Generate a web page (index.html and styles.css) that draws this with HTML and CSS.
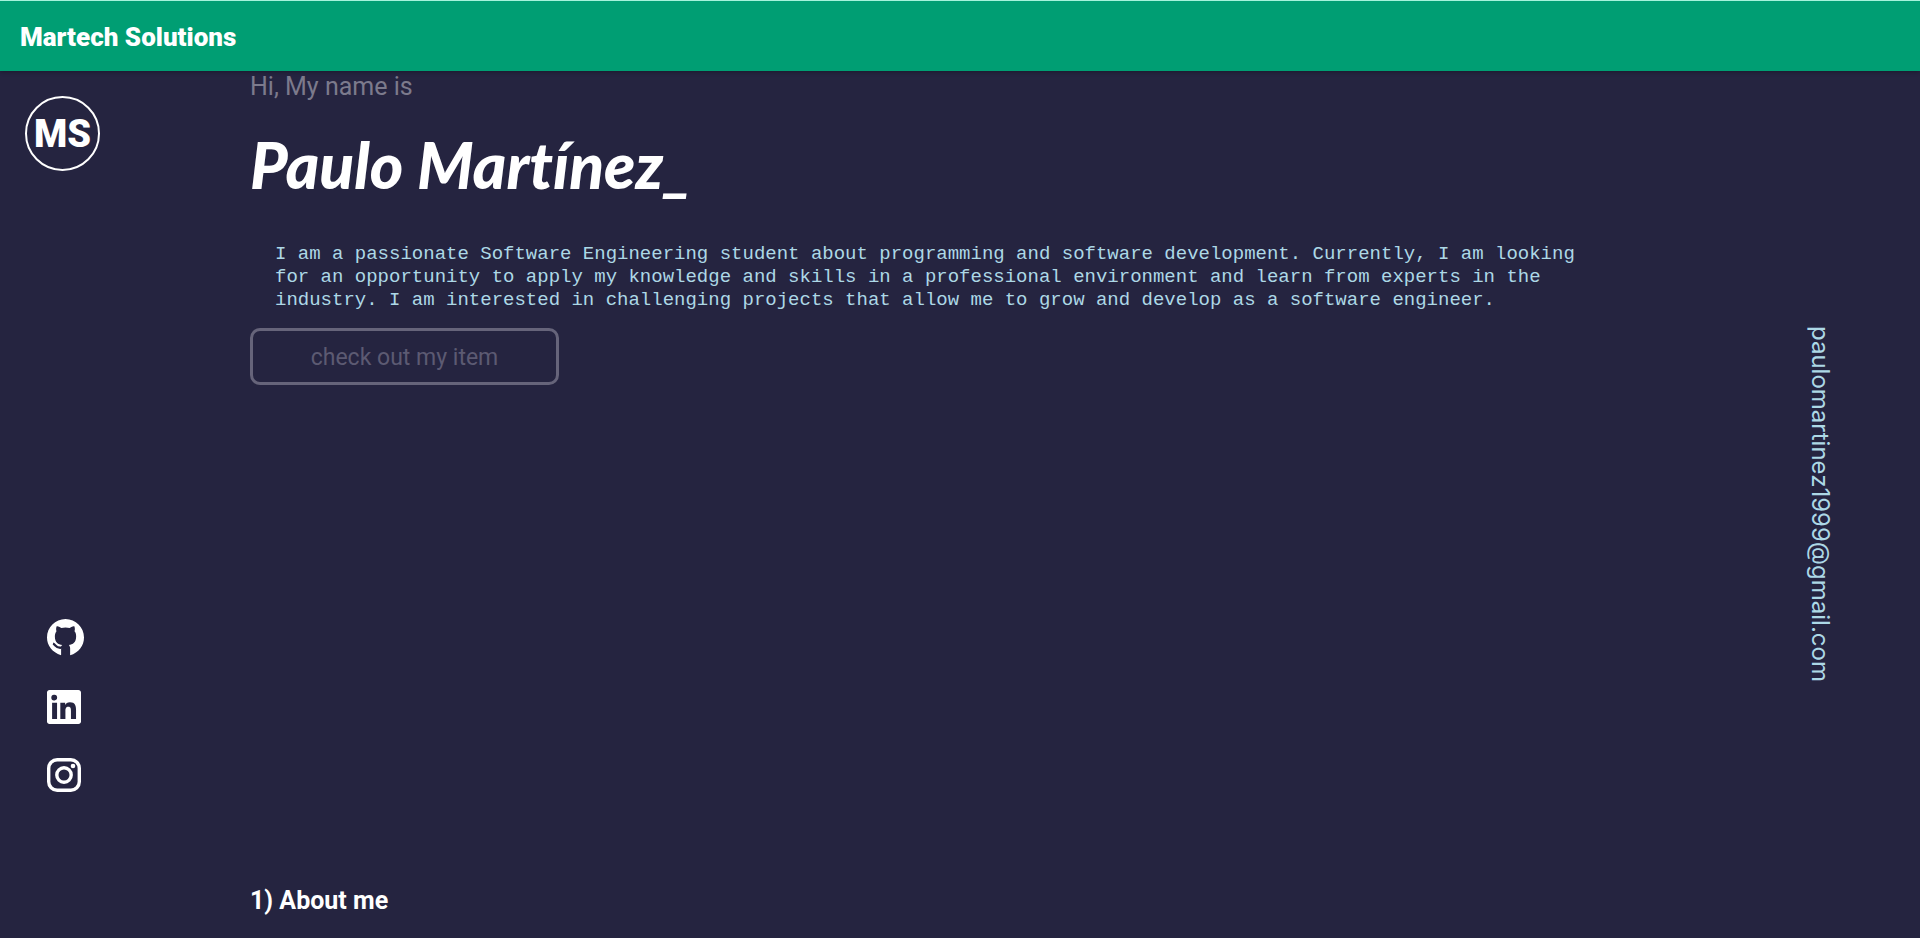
FILE: index.html
```html
<!DOCTYPE html>
<html lang="en">
<head>
<meta charset="utf-8">
<meta name="viewport" content="width=device-width, initial-scale=1">
<title>Martech Solutions</title>
<link rel="stylesheet" href="styles.css">
</head>
<body>
<header class="topbar"><a class="brand" href="#home">Martech Solutions</a></header>
<div class="page">
  <aside class="rail">
    <a class="logo" href="#home">MS</a>
    <nav class="social" aria-label="Social networks">
      <a class="social-link" href="#github" aria-label="GitHub">
        <svg class="icon icon-github" viewBox="0 0 16 16"><path d="M8 0C3.580 0 0 3.580 0 8c0 3.400 2.200 6.400 6.100 7.700V12.500C5.900 11.900 6.100 11.600 6.600 11.200c-1.780-.2-3.200-.95-3.200-3.750 0-.87.31-1.590.7-2.150-.08-.2-.36-1.020.08-2.120 0 0 .67-.1 2 .75a7.600 7.600 0 0 1 3.640 0c1.330-.85 2-.75 2-.75.44 1.100.16 1.920.08 2.120.51.560.7 1.270.7 2.150 0 2.800-1.420 3.550-3.200 3.750.35.3.6.8.6 1.480V15.700C13.700 14.600 16 11.540 16 8c0-4.420-3.580-8-8-8z"/><path class="tail" d="M2.600 10.700c1.200.3 1.100 2 3.500 1.700"/></svg>
      </a>
      <a class="social-link" href="#linkedin" aria-label="LinkedIn">
        <svg class="icon" viewBox="0 0 24 24"><path fill-rule="evenodd" d="M22.200 0H1.800C.8 0 0 .8 0 1.700v20.600c0 .9.8 1.700 1.800 1.700h20.400c1 0 1.800-.8 1.800-1.700V1.700C24 .8 23.200 0 22.200 0zM7.100 20.400H3.600V9h3.500v11.400zM5.300 7.400a2.060 2.060 0 1 1 0-4.100 2.060 2.060 0 0 1 0 4.100zM20.500 20.400h-3.600v-5.500c0-1.300 0-3-1.800-3s-2.100 1.400-2.100 2.900v5.600H9.400V9h3.400v1.600c.5-.9 1.600-1.900 3.400-1.900 3.600 0 4.300 2.400 4.300 5.500v6.200z"/></svg>
      </a>
      <a class="social-link" href="#instagram" aria-label="Instagram">
        <svg class="icon" viewBox="0 0 34 34"><rect x="1.700" y="1.700" width="30.600" height="30.600" rx="8.500" fill="none" stroke="currentColor" stroke-width="3.400"/><circle cx="17" cy="17" r="7.200" fill="none" stroke="currentColor" stroke-width="3.400"/><circle cx="26" cy="8" r="2.300"/></svg>
      </a>
    </nav>
  </aside>
  <main class="content">
    <section class="hero" id="home">
      <p class="greeting">Hi, My name is</p>
      <h1 class="name">Paulo Martínez_</h1>
      <p class="bio">I am a passionate Software Engineering student about programming and software development. Currently, I am looking for an opportunity to apply my knowledge and skills in a professional environment and learn from experts in the industry. I am interested in challenging projects that allow me to grow and develop as a software engineer.</p>
      <button class="cta" type="button">check out my item</button>
    </section>
    <section class="about"><h2 class="section-title">1) About me</h2></section>
  </main>
  <aside class="contact"><a class="email" href="mailto:paulomartinez1999@gmail.com">paulomartinez1999@gmail.com</a></aside>
</div>
</body>
</html>
```
FILE: styles.css
```css
* { box-sizing: border-box; }
body {
  margin: 0;
  min-height: 100vh;
  display: flex;
  flex-direction: column;
  background: #252440;
  color: #fff;
  font-family: Roboto, sans-serif;
}
a { color: inherit; text-decoration: none; }
h1, h2, p { margin: 0; }
.topbar {
  display: flex;
  align-items: center;
  height: 71px;
  padding: 2px 20px 0;
  border-top: 1px solid #a5f3dc;
  background: #009e73;
  box-shadow: 0 1px 4px rgba(0, 0, 0, 0.3);
}
.brand { font: 900 26px/32px Roboto, sans-serif; }
.page {
  flex: 1;
  display: grid;
  grid-template-columns: 250px minmax(0, 1fr) 335px;
}
.rail {
  display: flex;
  flex-direction: column;
  justify-content: space-between;
  align-items: flex-start;
  padding: 25px 25px 146px;
}
.logo {
  display: flex;
  align-items: center;
  justify-content: center;
  width: 75px;
  height: 75px;
  border: 2px solid #fff;
  border-radius: 50%;
  font: 900 38px/40px Roboto, sans-serif;
}
.social { display: flex; flex-direction: column; gap: 34px; padding-left: 22px; }
.social-link { display: flex; }
.icon { width: 34px; height: 34px; fill: currentColor; }
.icon-github { width: 37px; height: 37px; }
.tail { fill: none; stroke: #252440; stroke-width: 1; }
.content { display: flex; flex-direction: column; justify-content: space-between; padding: 1px 0 21px; }
.hero { display: flex; flex-direction: column; align-items: flex-start; }
.greeting { color: #7c7a8c; font-size: 25px; line-height: 30px; }
.name { margin-top: 27px; font: italic 900 64px/72px Lato, sans-serif; font-variant-ligatures: none; }
.bio {
  margin: 42px 0 16px;
  padding-left: 25px;
  color: #add8e6;
  font: 19px/23px "Liberation Mono", monospace;
}
.cta {
  width: 309px;
  height: 57px;
  padding: 2px 0 0;
  border: 3px solid #66647a;
  border-radius: 10px;
  background: transparent;
  color: #5c5a72;
  font: 23px/28px Roboto, sans-serif;
}
.section-title { font-size: 25px; line-height: 32px; }
.contact { display: flex; justify-content: flex-end; align-items: flex-start; padding: 255px 85px 0 0; }
.email {
  color: #add8e6;
  font: 24px/30px Inter, sans-serif;
  writing-mode: vertical-rl;
}
```
